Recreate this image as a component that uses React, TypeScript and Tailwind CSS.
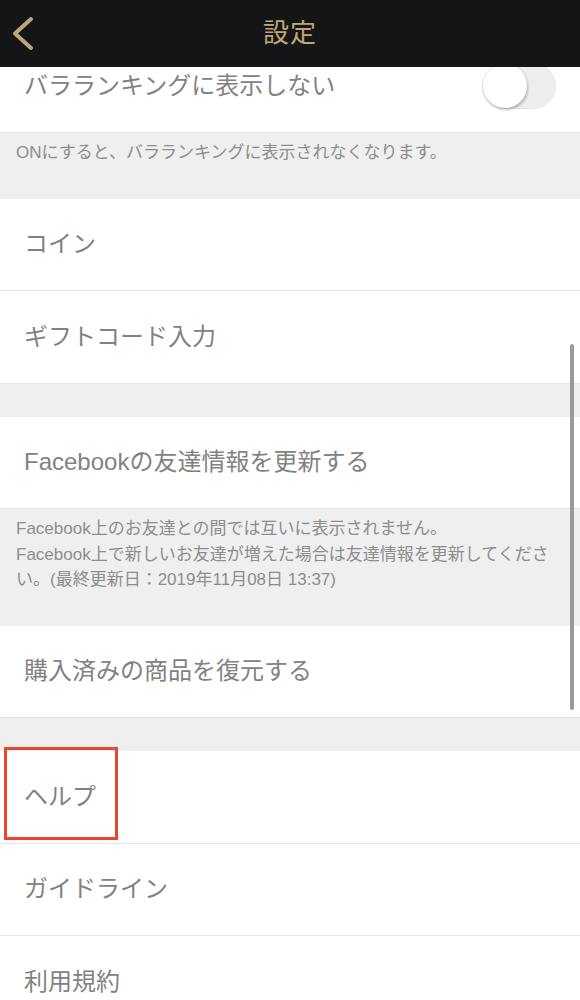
import React, { useState } from "react";

const font = { fontFamily: '"Liberation Sans", "Noto Sans CJK JP", sans-serif' };

function Row({ label, children }: { label: string; children?: React.ReactNode }) {
  return (
    <div className="relative flex h-[92.5px] items-center justify-between border-b border-[#e4e4e4] bg-white pl-6 pr-6">
      <span className="text-[24px] text-[#828282]">{label}</span>
      {children}
    </div>
  );
}

function Note({ children }: { children: React.ReactNode }) {
  return (
    <div className="bg-[#efefef] pl-4 pr-2 pt-[7px] pb-[33px] text-[17px] leading-[25.5px] text-[#8d8d8d] whitespace-nowrap">
      {children}
    </div>
  );
}

function Gap() {
  return <div className="h-[33px] bg-[#efefef]" />;
}

function Toggle() {
  const [on, setOn] = useState(false);
  return (
    <button
      onClick={() => setOn(!on)}
      className={
        on
          ? "relative flex h-[46px] w-[74px] items-center rounded-full bg-[#c0a676] p-[1px]"
          : "relative flex h-[46px] w-[74px] items-center rounded-full border border-[#e6e6e6] bg-[#eeeeee]"
      }
    >
      <span
        className={
          on
            ? "ml-auto h-[44px] w-[44px] rounded-full bg-white shadow-[0_2px_3px_rgba(0,0,0,0.25)]"
            : "h-[44px] w-[44px] rounded-full bg-white shadow-[1px_2px_3px_rgba(0,0,0,0.25)]"
        }
      />
    </button>
  );
}

export default function App() {
  return (
    <div className="flex h-[1000px] w-[580px] flex-col overflow-hidden bg-[#efefef]" style={font}>
      {/* ヘッダー */}
      <div className="relative z-10 flex h-[67px] shrink-0 items-center justify-center bg-[#141517]">
        <button className="absolute left-[11px] top-[15px]">
          <svg width="26" height="38" viewBox="0 0 26 38" fill="none">
            <path d="M20 4 L4 18.5 L20 33" stroke="#c0a676" strokeWidth="4" strokeLinecap="round" strokeLinejoin="round" />
          </svg>
        </button>
        <span className="text-[26px] tracking-[1px] text-[#c0a676]">設定</span>
      </div>

      {/* リスト（スクロール済み） */}
      <div className="relative flex-1 overflow-hidden">
        <div className="mt-[-26.5px]">
          <Row label="バラランキングに表示しない">
            <Toggle />
          </Row>
          <Note>ONにすると、バラランキングに表示されなくなります。</Note>
          <Row label="コイン" />
          <Row label="ギフトコード入力" />
          <Gap />
          <Row label="Facebookの友達情報を更新する" />
          <Note>
            Facebook上のお友達との間では互いに表示されません。
            <br />
            Facebook上で新しいお友達が増えた場合は友達情報を更新してくださ
            <br />
            い。(最終更新日：2019年11月08日 13:37)
          </Note>
          <Row label="購入済みの商品を復元する" />
          <Gap />
          <Row label="ヘルプ">
            <div className="pointer-events-none absolute left-[4px] top-[-4px] h-[93px] w-[114px] border-[3px] border-[#e9472d]" />
          </Row>
          <Row label="ガイドライン" />
          <Row label="利用規約" />
        </div>
        {/* スクロールバー */}
        <div className="absolute right-[6px] top-[277px] h-[366px] w-[4px] rounded-full bg-[#9a9a9a]" />
      </div>
    </div>
  );
}
